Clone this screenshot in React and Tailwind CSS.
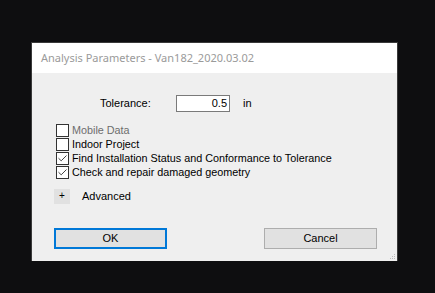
import React from 'react';

const Check = ({ checked }) => (
  <span className="w-[13px] h-[13px] border border-[#333333] bg-white flex items-center justify-center shrink-0">
    {checked && (
      <svg width="9" height="7" viewBox="0 0 9 7">
        <path d="M0.5 3.2 L3.2 5.8 L8.5 0.5" fill="none" stroke="#444" strokeWidth="1" />
      </svg>
    )}
  </span>
);

const Row = ({ checked, disabled, children }) => (
  <div className="h-[14px] flex items-center gap-[3px]">
    <Check checked={checked} />
    <span className={disabled ? 'text-[#6d6d6d]' : 'text-black'}>{children}</span>
  </div>
);

const App = () => {
  return (
    <div className="w-[435px] h-[293px] bg-[#0e0e10] pt-[42px] pl-[31px]" style={{ fontFamily: '"Liberation Sans", Arial, sans-serif' }}>
      <div className="w-[367px] border border-[#3a3a3a] border-b-0">
        {/* barra de título */}
        <div className="h-[30px] bg-white flex items-center pl-[9px] text-[11px] text-[#9a9a9a]" style={{ fontFamily: '"Noto Sans", sans-serif' }}>
          Analysis Parameters - Van182_2020.03.02
        </div>

        <div className="bg-[#efefef] h-[188px] relative text-[11px] text-black">
          <div className="flex items-center pt-[22px] pl-[68px] h-[39px]">
            <span className="w-[76px]">Tolerance:</span>
            <div className="w-[54px] h-[17px] border border-[#7a7a7a] bg-white flex items-center justify-end pr-[2px]">0.5</div>
            <span className="ml-[13px]">in</span>
          </div>

          <div className="flex flex-col pl-[24px] mt-[11px] text-[10.8px]">
            <Row disabled>Mobile Data</Row>
            <Row>Indoor Project</Row>
            <Row checked>Find Installation Status and Conformance to Tolerance</Row>
            <Row checked>Check and repair damaged geometry</Row>
          </div>

          <div className="flex items-center pl-[22px] mt-[9px]">
            <span className="w-[16px] h-[15px] bg-[#e1e1e1] flex items-center justify-center text-[10px] leading-none">+</span>
            <span className="ml-[12px]">Advanced</span>
          </div>

          <div className="flex pl-[22px] mt-[23px] gap-[97px]">
            <button className="w-[113px] h-[21px] bg-[#e1e1e1] border-2 border-[#0078d7] flex items-center justify-center">OK</button>
            <button className="w-[113px] h-[21px] bg-[#e1e1e1] border border-[#adadad] flex items-center justify-center">Cancel</button>
          </div>

          <svg className="absolute right-[1px] bottom-[1px]" width="6" height="6" viewBox="0 0 6 6">
            <rect x="4" y="0" width="1" height="1" fill="#bcbcbc" />
            <rect x="2" y="2" width="1" height="1" fill="#bcbcbc" />
            <rect x="4" y="2" width="1" height="1" fill="#bcbcbc" />
            <rect x="0" y="4" width="1" height="1" fill="#bcbcbc" />
            <rect x="2" y="4" width="1" height="1" fill="#bcbcbc" />
            <rect x="4" y="4" width="1" height="1" fill="#bcbcbc" />
          </svg>
        </div>
      </div>
    </div>
  );
};

export default App;
